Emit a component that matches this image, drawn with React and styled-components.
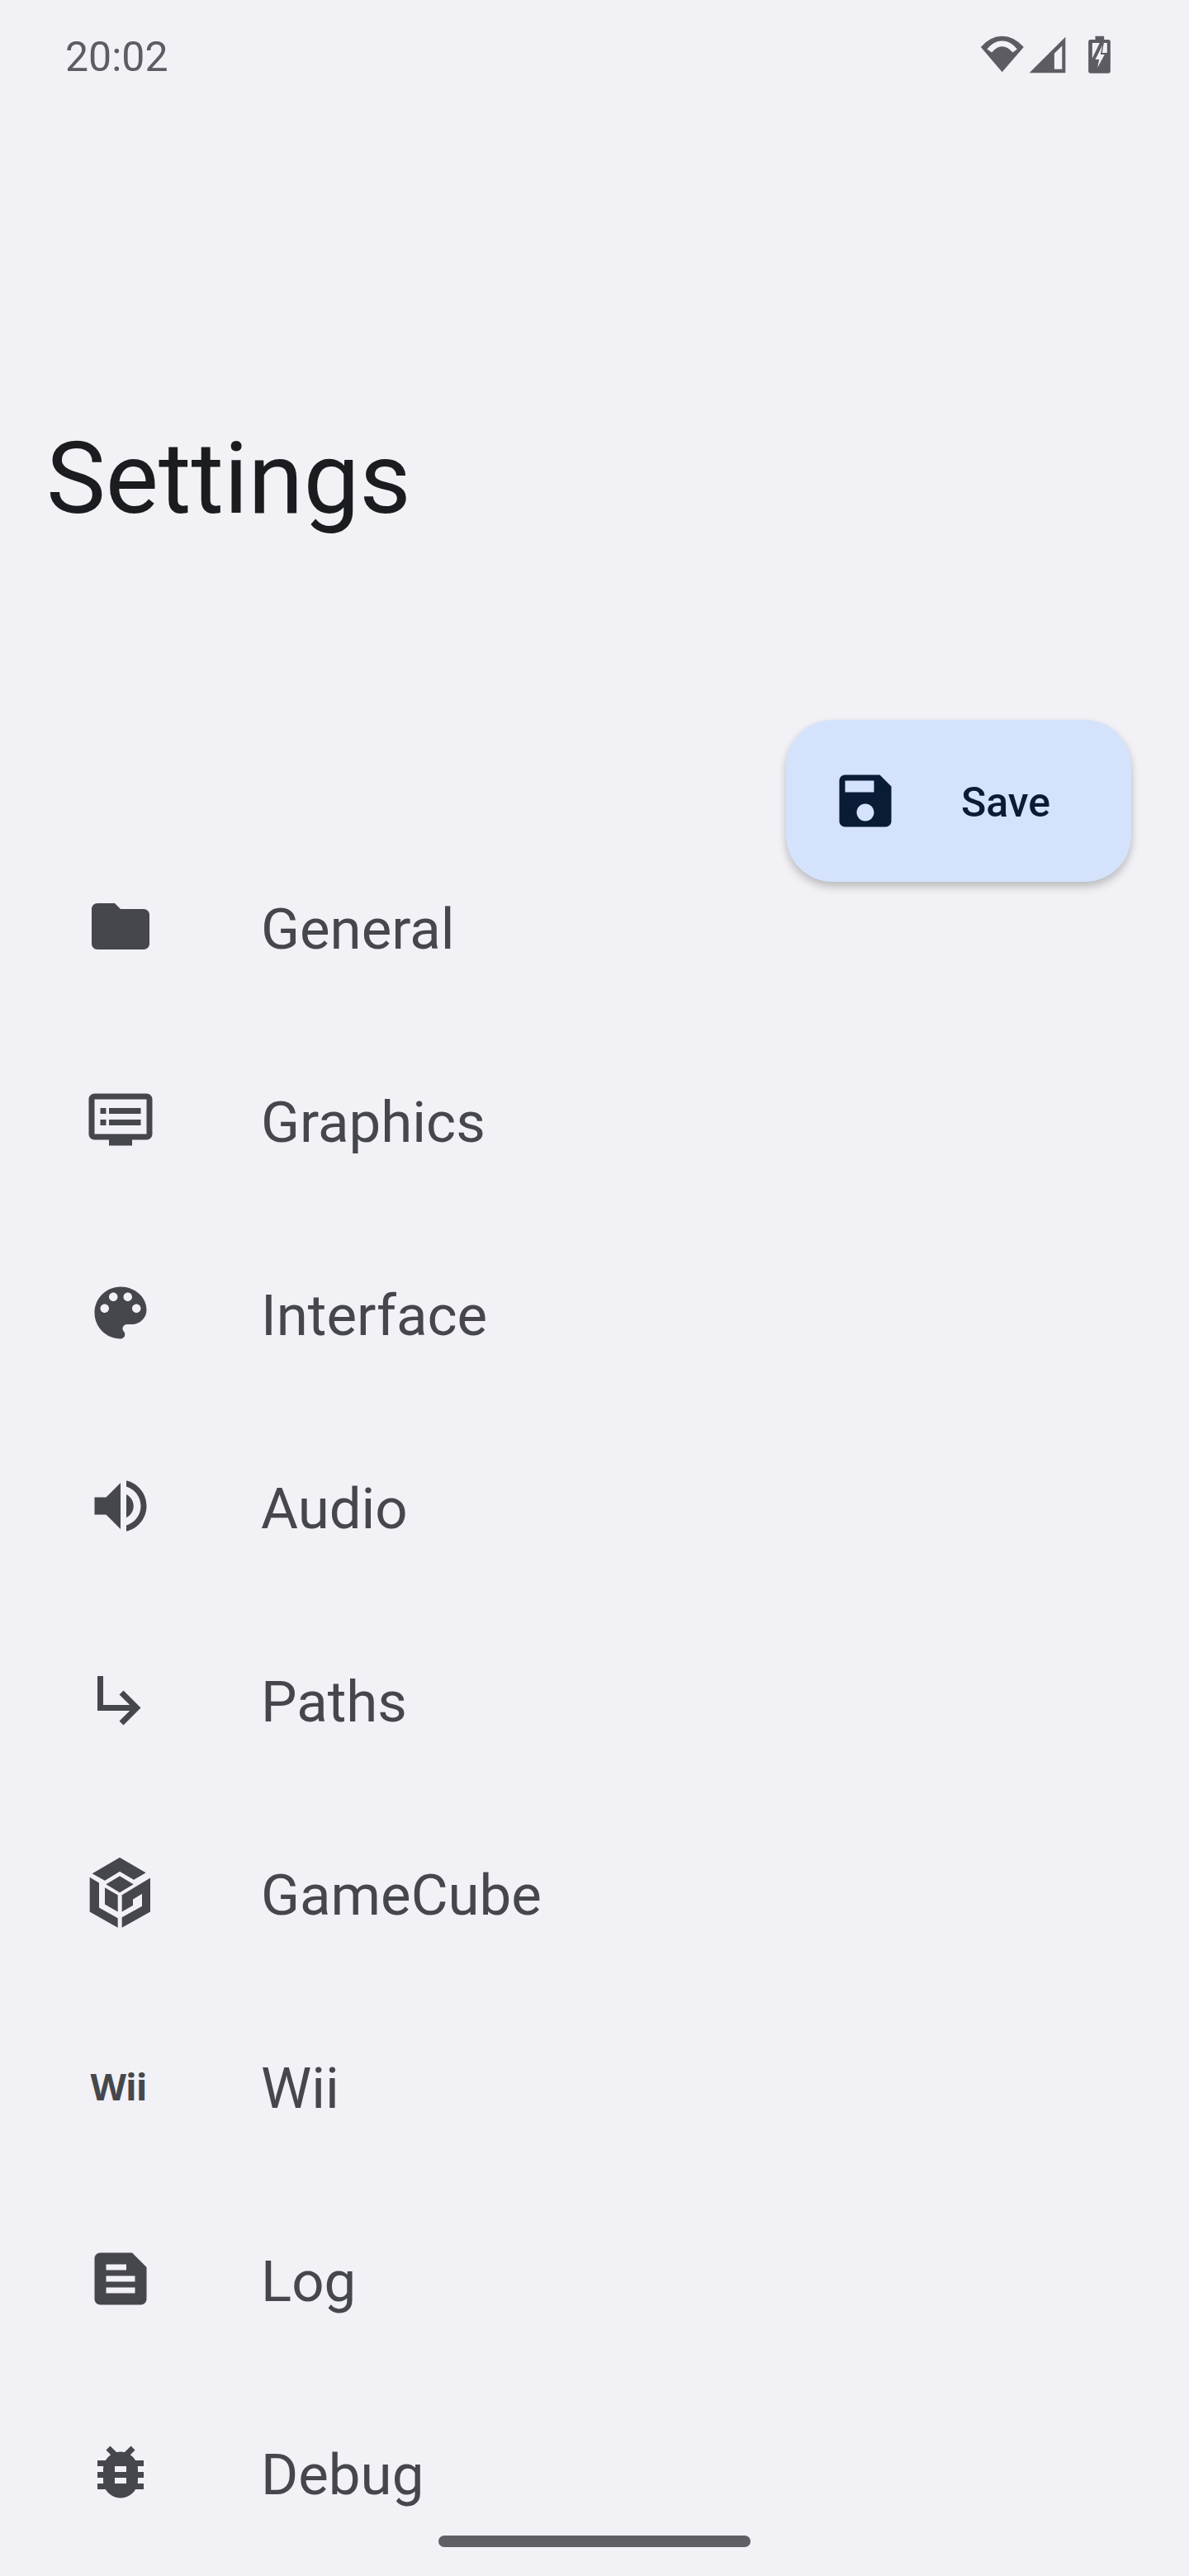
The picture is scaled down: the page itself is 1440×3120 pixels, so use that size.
import React from 'react';
import styled, { createGlobalStyle } from 'styled-components';

const GlobalStyle = createGlobalStyle`
html, body {
    margin: 0;
    padding: 0;
    background: #f1f1f6;
}
`;

const items = [
    { label: 'General', icon: 'M10 4H4c-1.1 0-2 .9-2 2v12c0 1.1.9 2 2 2h16c1.1 0 2-.9 2-2V8c0-1.1-.9-2-2-2h-8l-2-2z' },
    { label: 'Graphics', icon: 'M21 3H3c-1.1 0-2 .9-2 2v12c0 1.1.9 2 2 2h5v2h8v-2h5c1.1 0 1.99-.9 1.99-2L23 5c0-1.1-.9-2-2-2zm0 14H3V5h18v12zm-2-9H8v2h11V8zm0 4H8v2h11v-2zM7 8H5v2h2V8zm0 4H5v2h2v-2z' },
    { label: 'Interface', icon: 'M12 3c-4.97 0-9 4.03-9 9s4.03 9 9 9c.83 0 1.5-.67 1.5-1.5 0-.39-.15-.74-.39-1.04-.23-.26-.38-.61-.38-.99 0-.83.67-1.5 1.5-1.5H16c2.76 0 5-2.24 5-5 0-4.42-4.03-8-9-8zm-5.5 9c-.83 0-1.5-.67-1.5-1.5S5.67 9 6.5 9 8 9.67 8 10.5 7.33 12 6.5 12zm3-4C8.67 8 8 7.33 8 6.5S8.67 5 9.5 5s1.5.67 1.5 1.5S10.33 8 9.5 8zm5 0c-.83 0-1.5-.67-1.5-1.5S13.67 5 14.5 5s1.5.67 1.5 1.5S15.33 8 14.5 8zm3 4c-.83 0-1.5-.67-1.5-1.5S16.67 9 17.5 9s1.5.67 1.5 1.5-.67 1.5-1.5 1.5z' },
    { label: 'Audio', icon: 'M3 9v6h4l5 5V4L7 9H3zm13.5 3c0-1.77-1.02-3.29-2.5-4.03v8.05c1.48-.73 2.5-2.25 2.5-4.02zM14 3.23v2.06c2.89.86 5 3.54 5 6.71s-2.11 5.85-5 6.71v2.06c4.01-.91 7-4.49 7-8.77s-2.99-7.86-7-8.77z' },
    { label: 'Paths', icon: 'M19 15l-6 6-1.42-1.42L15.17 16H4V4h2v10h9.17l-3.59-3.58L13 9l6 6z' },
    { label: 'GameCube', cube: true },
    { label: 'Wii', wii: true },
    { label: 'Log', icon: 'M16 3H5c-1.1 0-2 .9-2 2v14c0 1.1.9 2 2 2h14c1.1 0 2-.9 2-2V8l-5-5zM7 7h7v2H7V7zm10 10H7v-2h10v2zm0-4H7v-2h10v2z' },
    { label: 'Debug', icon: 'M20 8h-2.81c-.45-.78-1.07-1.45-1.82-1.96L17 4.41 15.59 3l-2.17 2.17C12.96 5.06 12.49 5 12 5c-.49 0-.96.06-1.41.17L8.41 3 7 4.41l1.62 1.63C7.88 6.55 7.26 7.22 6.81 8H4v2h2.09c-.05.33-.09.66-.09 1v1H4v2h2v1c0 .34.04.67.09 1H4v2h2.81c1.04 1.79 2.97 3 5.19 3s4.15-1.21 5.19-3H20v-2h-2.09c.05-.33.09-.66.09-1v-1h2v-2h-2v-1c0-.34-.04-.67-.09-1H20V8zm-6 8h-4v-2h4v2zm0-4h-4v-2h4v2z' },
];

const CubeIcon = () => (
    <CubeSvg viewBox="80 80 240 272">
        <polygon points="197,88 292,143 248,169 197,139 143,172 97,146" />
        <polygon points="197,155 247,185 197,215 147,185" />
        <polygon points="143,197 190,224 190,285 143,258" />
        <polygon points="88,160 122,180 122,270 190,308 190,343 88,285" />
        <polygon points="205,224 308,162 308,285 205,343 205,305 278,265 278,220 245,240 245,262 205,285" />
    </CubeSvg>
);

const StatusIcons = () => (
    <StatusIconRow>
        <svg width="56" height="47" viewBox="50 35 168 142">
            <path fill="#5c5c62" d="M55 80Q90 40 133 40T212 80L133 172Z" />
            <path fill="#f1f1f6" d="M78 88Q102 58 133 58T188 88L172 100Q152 78 133 78T95 100Z" />
        </svg>
        <svg width="45" height="45" viewBox="226 40 134 134">
            <path fill="#5c5c62" d="M228 172L358 42V172Z" />
            <path fill="#f1f1f6" d="M318 102L346 74V158H318Z" />
        </svg>
        <BatterySvg width="29" height="46" viewBox="432 35 86 138">
            <path fill="#5c5c62" d="M460 37H492V50H507Q515 50 515 58V164Q515 172 507 172H443Q435 172 435 164V58Q435 50 443 50H460Z" />
            <path fill="#f1f1f6" d="M449 62H476L449 118ZM491 62H503V98H485Z" />
            <path fill="#f1f1f6" d="M486 70L460 122H474L468 152L494 104H479Z" />
        </BatterySvg>
    </StatusIconRow>
);

export default function App() {
    return (
        <Page>
            <GlobalStyle />
            <StatusBar>
                <Clock>20:02</Clock>
                <StatusIcons />
            </StatusBar>
            <Header>
                <Title>Settings</Title>
            </Header>
            <SaveButton>
                <SaveIcon viewBox="0 0 24 24">
                    <path d="M17 3H5c-1.11 0-2 .9-2 2v14c0 1.1.89 2 2 2h14c1.1 0 2-.9 2-2V7l-4-4zm-5 16c-1.66 0-3-1.34-3-3s1.34-3 3-3 3 1.34 3 3-1.34 3-3 3zm3-10H5V5h10v4z" />
                </SaveIcon>
                <SaveLabel>Save</SaveLabel>
            </SaveButton>
            <List>
                {items.map((item) => (
                    <Row key={item.label}>
                        <IconSlot>
                            {item.cube && <CubeIcon />}
                            {item.wii && <WiiMark>Wii</WiiMark>}
                            {item.icon && (
                                <RowIcon viewBox="0 0 24 24">
                                    <path d={item.icon} />
                                </RowIcon>
                            )}
                        </IconSlot>
                        <Label>{item.label}</Label>
                    </Row>
                ))}
            </List>
            <HomeBar />
        </Page>
    );
}

const Page = styled.div`
position: relative;
width: 1440px;
height: 3120px;
overflow: hidden;
background: #f1f1f6;
font-family: Roboto, "Noto Sans", sans-serif;
`;

const StatusBar = styled.div`
display: flex;
align-items: center;
justify-content: space-between;
box-sizing: border-box;
height: 130px;
padding: 0 98px 0 79px;
`;

const Clock = styled.span`
padding-top: 8px;
font-size: 50px;
line-height: 126px;
color: #5c5c62;
`;

const StatusIconRow = styled.div`
display: flex;
align-items: flex-end;
gap: 4px;
margin-right: -4px;
`;

const BatterySvg = styled.svg`
margin-left: 22px;
`;

const Header = styled.header`
box-sizing: border-box;
height: 875px;
padding: 370px 0 0 56px;
`;

const Title = styled.h1`
margin: 0;
font-size: 121px;
font-weight: 400;
line-height: 160px;
color: #1a1c20;
`;

const SaveButton = styled.div`
position: absolute;
top: 872px;
left: 952px;
display: flex;
align-items: center;
box-sizing: border-box;
width: 418px;
height: 196px;
padding-left: 54px;
border-radius: 56px;
background: #d4e3fb;
box-shadow: 0 7px 11px rgba(0, 0, 0, 0.16), 0 3px 10px rgba(0, 0, 0, 0.08);
`;

const SaveIcon = styled.svg`
width: 84px;
height: 84px;
fill: #0a1b36;
`;

const SaveLabel = styled.span`
margin-left: 74px;
padding-top: 4px;
font-size: 50px;
font-weight: 500;
color: #0a1b36;
`;

const List = styled.div`
display: flex;
flex-direction: column;
`;

const Row = styled.div`
display: flex;
align-items: center;
height: 234px;
padding-left: 104px;
`;

const IconSlot = styled.div`
display: flex;
align-items: center;
justify-content: center;
flex: none;
width: 84px;
height: 84px;
margin-right: 128px;
`;

const RowIcon = styled.svg`
display: block;
width: 84px;
height: 84px;
fill: #45474c;
`;

const CubeSvg = styled.svg`
display: block;
flex: none;
width: 80px;
height: 91px;
fill: #45474c;
`;

const WiiMark = styled.span`
margin-right: 5px;
font-family: "Open Sans", sans-serif;
font-size: 45px;
font-weight: 700;
letter-spacing: -1px;
color: #45474c;
`;

const Label = styled.span`
padding-top: 8px;
font-size: 69px;
line-height: 80px;
color: #45474c;
`;

const HomeBar = styled.div`
position: absolute;
left: 531px;
bottom: 35px;
width: 378px;
height: 14px;
border-radius: 7px;
background: #605f65;
`;
